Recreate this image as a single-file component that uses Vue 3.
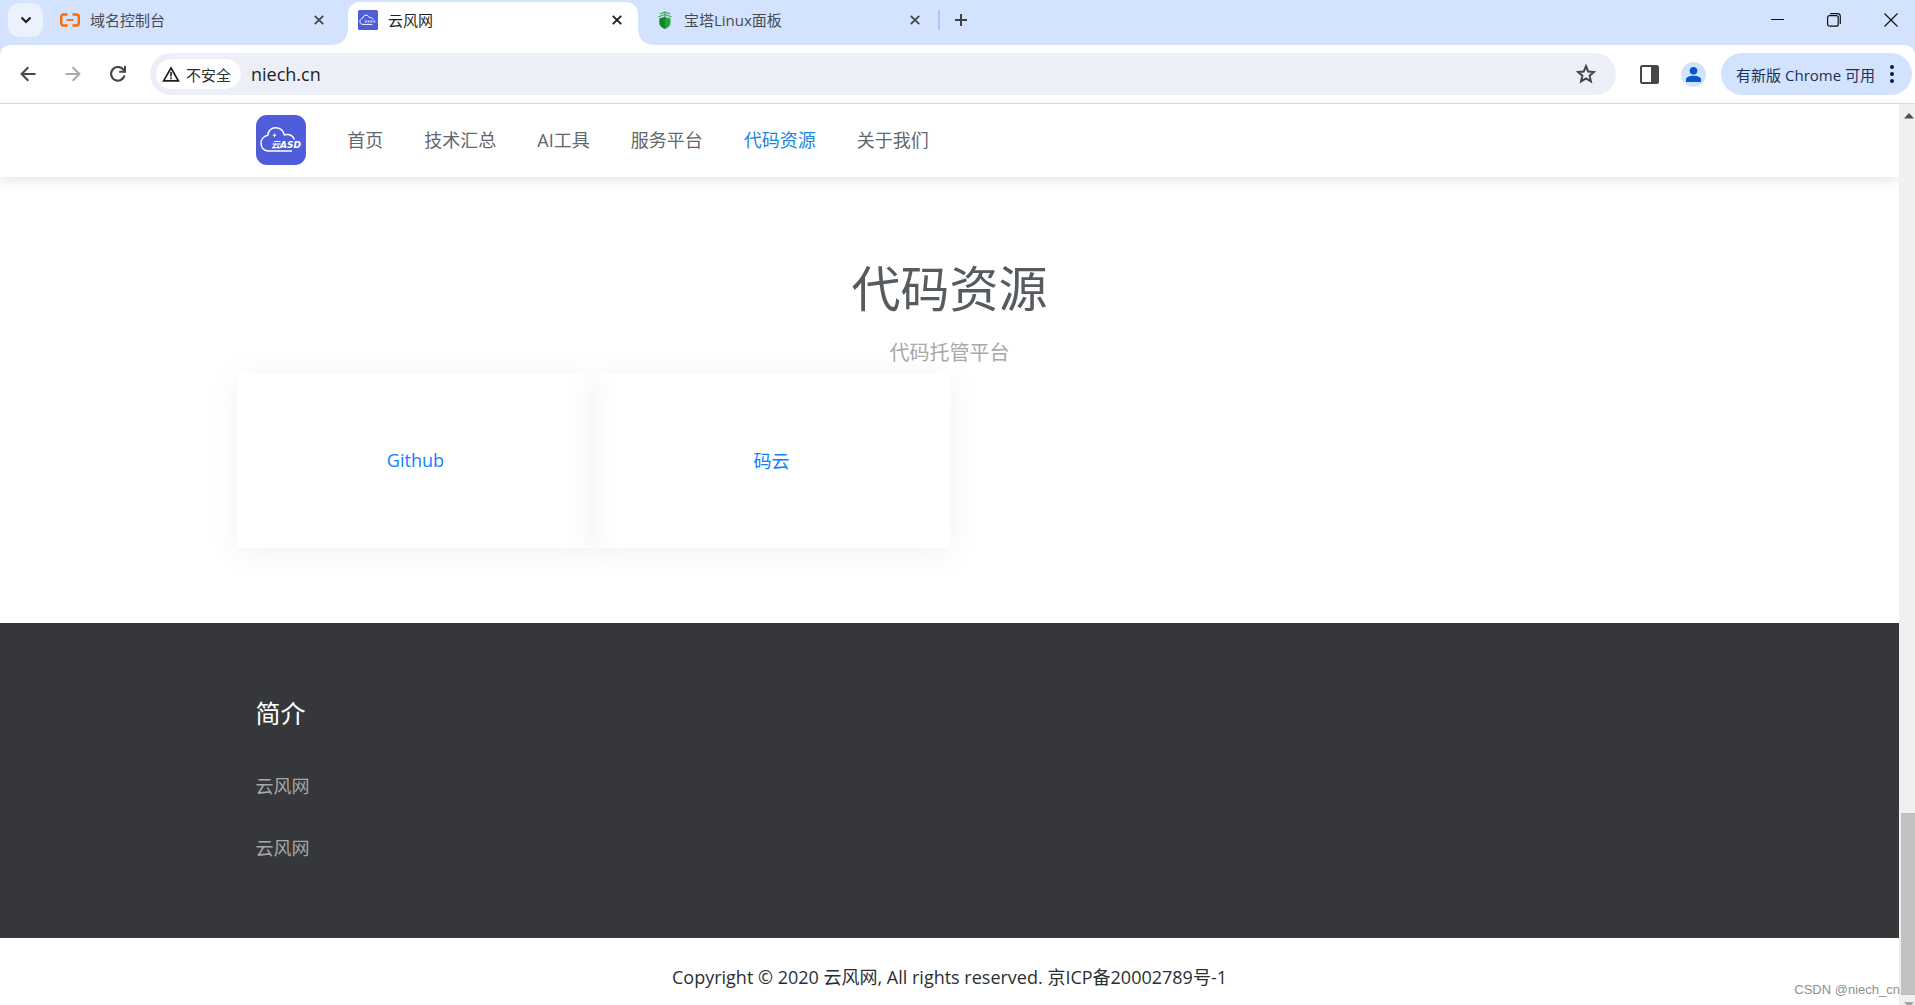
<script setup>
const tabs = [
  { title: '域名控制台', icon: 'aliyun', active: false },
  { title: '云风网', icon: 'cloud', active: true },
  { title: '宝塔Linux面板', icon: 'bt', active: false }
]
const nav = ['首页', '技术汇总', 'AI工具', '服务平台', '代码资源', '关于我们']
const current = '代码资源'
const cards = ['Github', '码云']
const intro = ['云风网', '云风网']
</script>

<template>
  <div class="window">
    <header class="tabstrip">
      <button class="tab-search" aria-label="搜索标签页">
        <svg width="12" height="8" viewBox="0 0 12 8"><path d="M1.500 1.500 6 6l4.500-4.500" fill="none" stroke="#1f1f1f" stroke-width="2.200" /></svg>
      </button>
      <div v-for="t in tabs" :key="t.title" class="tab" :class="{ active: t.active }">
        <svg v-if="t.icon === 'aliyun'" width="20" height="20" viewBox="0 0 20 20">
          <path d="M7.500 4.500H4Q1.200 4.500 1.200 7v6q0 2.500 2.800 2.500h3.500M12.500 4.500H16q2.800 0 2.800 2.500v6q0 2.500-2.800 2.500h-3.500" fill="none" stroke="#ff6a00" stroke-width="2.400" />
          <path d="M6.500 10h7" stroke="#ff6a00" stroke-width="1.800" />
        </svg>
        <svg v-else-if="t.icon === 'cloud'" width="20" height="20" viewBox="0 0 50 50">
          <rect width="50" height="50" rx="4" fill="#4f5dd8" />
          <path d="M36 36H12C3 36 2 22 12 20 14 11 26 10 28 19c6-1 9 2 10 5" fill="none" stroke="#fff" stroke-width="2.500" />
          <path d="M17 28.500h28" stroke="#c5caf5" stroke-width="5" stroke-dasharray="5 2" />
        </svg>
        <svg v-else width="18" height="20" viewBox="1 0 18 20">
          <path d="M4.500 8.500 10 7l5.500 1.500V13q0 3.500-5.500 6-5.500-2.500-5.500-6z" fill="#20a53a" />
          <path d="M4.500 8.500 10 7v12q-5.500-2.500-5.500-6z" fill="#16822c" />
          <path d="M10 1.500V7M5 4 10 2l5 2M3.300 7 10 4.500 16.700 7" fill="none" stroke="#3fae55" stroke-width="1.300" />
        </svg>
        <span class="tab-title">{{ t.title }}</span>
        <button class="tab-close" aria-label="关闭">
          <svg width="10" height="10" viewBox="0 0 10 10"><path d="m.8.8 8.400 8.400M9.200.8.8 9.200" stroke="currentColor" stroke-width="1.900" /></svg>
        </button>
      </div>
      <span class="divider"></span>
      <button class="new-tab" aria-label="新标签页">
        <svg width="14" height="14" viewBox="0 0 14 14"><path d="M7 1v12M1 7h12" stroke="#3c4043" stroke-width="2" /></svg>
      </button>
      <div class="win-controls">
        <button aria-label="最小化"><svg width="14" height="14" viewBox="0 0 14 14"><path d="M1 6.500h13" stroke="#111" /></svg></button>
        <button aria-label="还原">
          <svg width="14" height="14" viewBox="0 0 14 14" fill="none" stroke="#111" stroke-width="1.200"><rect x=".6" y="2.600" width="10.600" height="10.600" rx="2" /><path d="M3 .7h7.500q2.800 0 2.800 2.800V11" /></svg>
        </button>
        <button aria-label="关闭窗口"><svg width="14" height="14" viewBox="0 0 14 14"><path d="m.5.5 13 13m0-13-13 13" stroke="#111" stroke-width="1.200" /></svg></button>
      </div>
    </header>

    <div class="toolbar">
      <div class="nav-buttons">
        <button aria-label="后退"><svg width="16" height="16" viewBox="0 0 16 16"><path d="M15.500 8H2M8.300 1.300 1.600 8l6.700 6.700" fill="none" stroke="#444746" stroke-width="2" /></svg></button>
        <button aria-label="前进"><svg width="16" height="16" viewBox="0 0 16 16"><path d="M.5 8H14M7.700 1.300 14.400 8l-6.700 6.700" fill="none" stroke="#a9abaa" stroke-width="2" /></svg></button>
        <button aria-label="重新加载"><svg width="16" height="16" viewBox="0 0 16 16"><path d="M14.500 9.500A6.800 6.800 0 1 1 13 3.300L15 5.300" fill="none" stroke="#444746" stroke-width="2.200" /><path d="M15 0v5.800H9.200" fill="none" stroke="#444746" stroke-width="2" /></svg></button>
      </div>
      <div class="omnibox">
        <button class="chip">
          <svg width="18" height="16" viewBox="0 0 18 16"><path d="M9 2 16.400 14.800H1.600z" fill="none" stroke="#1f1f1f" stroke-width="1.700" /><path d="M9 6v4.500m0 1v1.800" stroke="#1f1f1f" stroke-width="1.600" /></svg>
          <span>不安全</span>
        </button>
        <input class="address" aria-label="地址" value="niech.cn" />
        <button class="star" aria-label="收藏">
          <svg width="20" height="20" viewBox="0 0 20 20"><path d="m10 2.200 2.200 5.300 5.700.5-4.300 3.700 1.300 5.600-4.900-3-4.900 3 1.300-5.600L2.100 8l5.700-.5z" fill="none" stroke="#444746" stroke-width="2" /></svg>
        </button>
      </div>
      <button class="side-panel" aria-label="侧边栏">
        <svg width="19" height="19" viewBox="0 0 19 19"><rect x="1" y="1" width="17" height="17" rx="1.500" fill="#fff" stroke="#444746" stroke-width="2" /><path d="M11 1h7v17h-7z" fill="#444746" /></svg>
      </button>
      <button class="avatar" aria-label="个人资料">
        <svg width="25" height="25" viewBox="0 0 25 25"><circle cx="12.500" cy="12.500" r="12.500" fill="#d3e3fd" /><circle cx="12.500" cy="8.800" r="3.800" fill="#0b57d0" /><path d="M5 20v-2.500c0-5 15-5 15 0V20z" fill="#0b57d0" /></svg>
      </button>
      <button class="update">
        <span>有新版 Chrome 可用</span>
        <svg width="4" height="18" viewBox="0 0 4 18" fill="#041e49"><circle cx="2" cy="2" r="2" /><circle cx="2" cy="9" r="2" /><circle cx="2" cy="16" r="2" /></svg>
      </button>
    </div>

    <div class="viewport">
      <div class="page">
        <nav class="navbar">
          <a href="#" class="logo" aria-label="云ASD">
            <svg width="50" height="50" viewBox="0 0 50 50">
              <rect width="50" height="50" rx="11" fill="#4f5dd8" />
              <path d="M36 36H12C3 35.500 2.500 22 11.800 20.300 12 10.500 26.500 10 28.300 19.800c5-1 8.700 1 10 4.700" fill="none" stroke="#fff" stroke-width="1.500" />
              <path d="M18.500 18.500v3.600m-1.800-1.800h3.600" stroke="#fff" stroke-width="1" />
              <text x="15" y="32.500" class="logo-text">云ASD</text>
            </svg>
          </a>
          <a v-for="n in nav" :key="n" href="#" class="nav-link" :class="{ current: n === current }">{{ n }}</a>
        </nav>

        <main class="section">
          <h1>代码资源</h1>
          <p class="subtitle">代码托管平台</p>
          <div class="cards">
            <div v-for="c in cards" :key="c" class="card"><a href="#">{{ c }}</a></div>
          </div>
        </main>

        <section class="intro">
          <h2>简介</h2>
          <p v-for="(line, i) in intro" :key="i">{{ line }}</p>
        </section>

        <footer class="copyright">Copyright © 2020 云风网, All rights reserved. 京ICP备20002789号-1</footer>
      </div>

      <div class="scrollbar">
        <svg class="up" width="10" height="6" viewBox="0 0 10 6"><path d="M0 5.500 5 0l5 5.500z" fill="#505050" /></svg>
        <span class="track"></span>
        <span class="thumb"></span>
        <svg class="down" width="10" height="3" viewBox="0 0 10 3"><path d="M0 0h10L5 5.500z" fill="#a3a3a3" /></svg>
      </div>
      <span class="watermark">CSDN @niech_cn</span>
    </div>
  </div>
</template>

<style>
body {
  background: #fff;
}
</style>

<style scoped>
* {
  box-sizing: border-box;
}
.window {
  display: flex;
  flex-direction: column;
  min-height: 100vh;
  font-family: "Open Sans", "Noto Sans CJK SC", sans-serif;
  font-weight: 400;
  color: #2b2f33;
}
button {
  display: flex;
  align-items: center;
  justify-content: center;
  padding: 0;
  border: 0;
  background: none;
  color: inherit;
  font: inherit;
}
a {
  text-decoration: none;
}
svg {
  display: block;
  flex: none;
}

/* Tab strip */
.tabstrip {
  display: flex;
  align-items: flex-start;
  height: 45px;
  padding-left: 8px;
  background: #d3e3fd;
}
.tab-search {
  width: 35px;
  height: 34px;
  margin: 3px 7px 0 0;
  border-radius: 11px;
  background: #ebf1fd;
}
.tab {
  position: relative;
  display: flex;
  align-items: center;
  width: 290px;
  height: 43px;
  margin: 2px 8px 0 0;
  padding: 0 16px 7px 10px;
  font-size: 15px;
  color: #474b4f;
}
.tab.active {
  border-radius: 12px 12px 0 0;
  background: #fff;
  color: #1f1f1f;
}
.tab.active::before,
.tab.active::after {
  content: "";
  position: absolute;
  bottom: 0;
  width: 14px;
  height: 14px;
}
.tab.active::before {
  right: 100%;
  background: radial-gradient(circle at 0 0, transparent 13px, #fff 14px);
}
.tab.active::after {
  left: 100%;
  background: radial-gradient(circle at 100% 0, transparent 13px, #fff 14px);
}
.tab-title {
  flex: 1;
  margin-left: 10px;
  line-height: 20px;
}
.divider {
  width: 2px;
  height: 20px;
  margin: 10px 14px 0 -6px;
  border-radius: 1px;
  background: #a8c7fa;
}
.new-tab {
  width: 14px;
  height: 40px;
}
.win-controls {
  display: flex;
  gap: 43px;
  height: 39px;
  margin-left: auto;
  padding-right: 17px;
}

/* Toolbar */
.toolbar {
  display: flex;
  align-items: center;
  height: 59px;
  padding: 0 3px 0 20px;
  border-bottom: 1px solid #dcdcdc;
  background:
    radial-gradient(circle at 9px 9px, transparent 8px, #d3e3fd 9px) 0 0 / 9px 9px no-repeat,
    radial-gradient(circle at 0 9px, transparent 8px, #d3e3fd 9px) 100% 0 / 9px 9px no-repeat,
    #fff;
}
.nav-buttons {
  display: flex;
  gap: 29px;
  margin-right: 24px;
}
.omnibox {
  display: flex;
  flex: 1;
  align-items: center;
  height: 42px;
  padding: 0 20px 0 6px;
  border-radius: 21px;
  background: #eceef8;
}
.chip {
  gap: 6px;
  height: 30px;
  padding: 0 10px 0 6px;
  border-radius: 15px;
  background: #fff;
  font-size: 15px;
  color: #303030;
}
.address {
  flex: 1;
  min-width: 0;
  margin-left: 10px;
  padding: 0;
  border: 0;
  outline: 0;
  background: none;
  font: inherit;
  font-size: 18px;
  line-height: 24px;
  color: #1f1f1f;
}
.side-panel {
  margin-left: 24px;
}
.avatar {
  margin-left: 22px;
}
.update {
  gap: 15px;
  height: 42px;
  margin-left: 15px;
  padding: 0 18px 0 15px;
  border-radius: 21px;
  background: #d3e3fd;
  font-size: 15px;
  color: #1a3158;
}

/* Page */
.viewport {
  position: relative;
  display: flex;
  flex: 1;
}
.page {
  display: flex;
  flex: 1;
  flex-direction: column;
}
.navbar {
  display: flex;
  align-items: center;
  gap: 41px;
  height: 73px;
  padding: 0 13.500% 2px;
  box-shadow: 0 4px 12px rgba(0, 0, 0, 0.1);
}
.nav-link {
  font-size: 18px;
  line-height: 28px;
  color: #62676c;
}
.nav-link.current {
  color: #1a86e0;
}
.section {
  width: 75%;
  margin: 0 auto;
  padding: 75px 0;
  text-align: center;
}
h1 {
  margin: 0;
  font-size: 49px;
  font-weight: 400;
  line-height: 72px;
  color: #565b60;
}
.subtitle {
  margin: 14px 0 5px;
  font-size: 20px;
  line-height: 30px;
  color: #a8a8a8;
}
.cards {
  display: flex;
  width: 50%;
}
.card {
  display: flex;
  flex: 1;
  align-items: center;
  justify-content: center;
  height: 175px;
  padding-bottom: 2px;
  box-shadow: 0 5px 30px rgba(0, 0, 0, 0.06);
}
.card a {
  font-size: 18px;
  color: #0d82ff;
}
.intro {
  height: 315px;
  padding: 70px 13.450%;
  background: #36373b;
}
h2 {
  margin: 0 0 32px;
  font-size: 25px;
  font-weight: 400;
  line-height: 40px;
  color: #fff;
}
.intro p {
  margin: 0 0 20px;
  font-size: 18px;
  line-height: 42px;
  color: #a8a8a8;
}
.copyright {
  padding: 26px 0 14px;
  font-size: 18px;
  line-height: 27px;
  text-align: center;
}

/* Scrollbar */
.scrollbar {
  display: flex;
  flex-direction: column;
  align-items: flex-end;
  width: 16px;
  padding-top: 9px;
  background: #f0f0f0;
}
.up,
.down {
  margin-right: 1px;
}
.track {
  flex: 1;
}
.thumb {
  width: 14px;
  height: 182px;
  margin-bottom: 7px;
  background: #c1c1c1;
}
.watermark {
  position: absolute;
  right: 15px;
  bottom: 5px;
  font-family: "Liberation Sans", Arial, sans-serif;
  font-size: 13px;
  line-height: 20px;
  color: #8f8f8f;
}
.logo-text {
  font-family: "DejaVu Sans", "Noto Sans CJK SC", sans-serif;
  font-size: 9px;
  font-style: italic;
  font-weight: 700;
  fill: #fff;
}
</style>
